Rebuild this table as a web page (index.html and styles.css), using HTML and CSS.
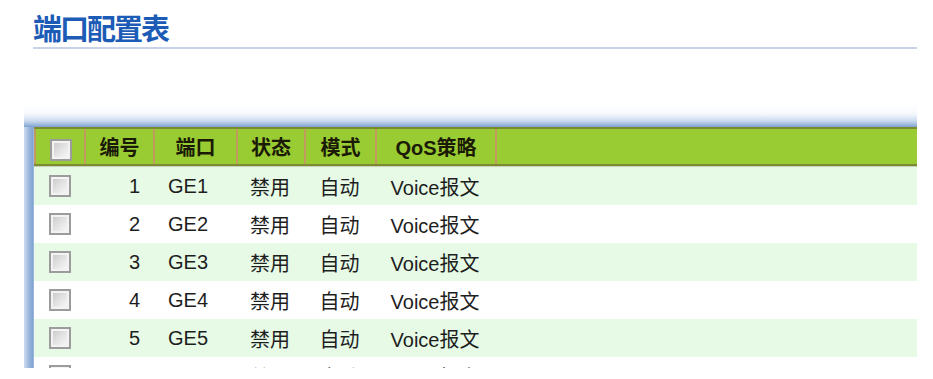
FILE: index.html
```html
<!DOCTYPE html>
<html lang="zh-CN">
<head>
<meta charset="utf-8">
<title>端口配置表</title>
<link rel="stylesheet" href="styles.css">
</head>
<body>
<div class="page">
  <h1 class="title">端口配置表</h1>
  <div class="panel">
    <div class="grid">
      <div class="row head">
        <div class="cell c-chk"><span class="chk"></span></div>
        <div class="cell">编号</div>
        <div class="cell">端口</div>
        <div class="cell">状态</div>
        <div class="cell">模式</div>
        <div class="cell">QoS策略</div>
        <div class="cell"></div>
      </div>
      <div class="row odd">
        <div class="cell c-chk"><span class="chk"></span></div>
        <div class="cell c-num">1</div>
        <div class="cell c-port">GE1</div>
        <div class="cell c-mid">禁用</div>
        <div class="cell c-mid">自动</div>
        <div class="cell c-mid">Voice报文</div>
        <div class="cell"></div>
      </div>
      <div class="row">
        <div class="cell c-chk"><span class="chk"></span></div>
        <div class="cell c-num">2</div>
        <div class="cell c-port">GE2</div>
        <div class="cell c-mid">禁用</div>
        <div class="cell c-mid">自动</div>
        <div class="cell c-mid">Voice报文</div>
        <div class="cell"></div>
      </div>
      <div class="row odd">
        <div class="cell c-chk"><span class="chk"></span></div>
        <div class="cell c-num">3</div>
        <div class="cell c-port">GE3</div>
        <div class="cell c-mid">禁用</div>
        <div class="cell c-mid">自动</div>
        <div class="cell c-mid">Voice报文</div>
        <div class="cell"></div>
      </div>
      <div class="row">
        <div class="cell c-chk"><span class="chk"></span></div>
        <div class="cell c-num">4</div>
        <div class="cell c-port">GE4</div>
        <div class="cell c-mid">禁用</div>
        <div class="cell c-mid">自动</div>
        <div class="cell c-mid">Voice报文</div>
        <div class="cell"></div>
      </div>
      <div class="row odd">
        <div class="cell c-chk"><span class="chk"></span></div>
        <div class="cell c-num">5</div>
        <div class="cell c-port">GE5</div>
        <div class="cell c-mid">禁用</div>
        <div class="cell c-mid">自动</div>
        <div class="cell c-mid">Voice报文</div>
        <div class="cell"></div>
      </div>
      <div class="row">
        <div class="cell c-chk"><span class="chk"></span></div>
        <div class="cell c-num">6</div>
        <div class="cell c-port">GE6</div>
        <div class="cell c-mid">禁用</div>
        <div class="cell c-mid">自动</div>
        <div class="cell c-mid">Voice报文</div>
        <div class="cell"></div>
      </div>
    </div>
  </div>
</div>
</body>
</html>
```

FILE: styles.css
```css
html {
  overflow: hidden;
}
body {
  margin: 0;
  background: #ffffff;
  font-family: "Liberation Sans", "Noto Sans CJK SC", sans-serif;
  color: #1e1e1e;
}
.page {
  height: 368px;
  overflow: hidden;
  padding: 0 16px 0 24px;
}
.title {
  margin: 0 0 0 9px;
  padding: 10px 0 3px 0;
  font-family: "Noto Sans CJK SC", sans-serif;
  font-size: 29px;
  line-height: 34px;
  font-weight: 700;
  letter-spacing: -2px;
  color: #1c5cb6;
  border-bottom: 2px solid #c8d3ea;
}
.panel {
  margin-top: 56px;
  padding: 22px 0 0 10px;
  background:
    linear-gradient(to right, #cddcf0 0, #9bb8de 5px, #7fa2d1 9px, #b6cbe7 10px) left 22px / 10px 100% no-repeat,
    linear-gradient(to bottom, rgba(255,255,255,0) 0, #f5f8fc 9px, #cbdaee 16px, #7ea2cf 22px) left top / 100% 22px no-repeat;
}
.grid {
  display: flex;
  flex-direction: column;
  background: #ffffff;
}
.row {
  display: grid;
  grid-template-columns: 50px 69px 83px 68px 71px 120px 1fr;
  height: 38px;
  align-items: center;
  font-size: 20px;
}
.row.odd {
  background: #e6fae6;
}
.row.head {
  height: 39px;
  box-sizing: border-box;
  background: #99cb33;
  border-top: 2px solid #7c8a30;
  border-bottom: 2px solid #7c8a30;
  box-shadow: 0 1px 0 #c7cfbb;
  align-items: stretch;
  font-weight: 700;
  color: #1a1a06;
  margin-bottom: 1px;
}
.row.head .cell {
  border-left: 2px solid #c19a5f;
  text-align: center;
  display: flex;
  align-items: center;
  justify-content: center;
}
.cell {
  white-space: nowrap;
}
.c-chk {
  display: flex;
  justify-content: center;
  padding-left: 1px;
}
.row.head .c-chk {
  padding-top: 6px;
}
.chk {
  display: block;
  width: 22px;
  height: 22px;
  box-sizing: border-box;
  border: 2px solid #9c9c9c;
  box-shadow: inset 0 0 0 2px #f3f3f3;
  background: linear-gradient(135deg, #c6c6c6 0%, #e6e6e6 55%, #fbfbfb 100%);
}
.c-num {
  text-align: right;
  padding-right: 13px;
}
.c-port {
  padding-left: 15px;
}
.c-mid {
  text-align: center;
}
```
